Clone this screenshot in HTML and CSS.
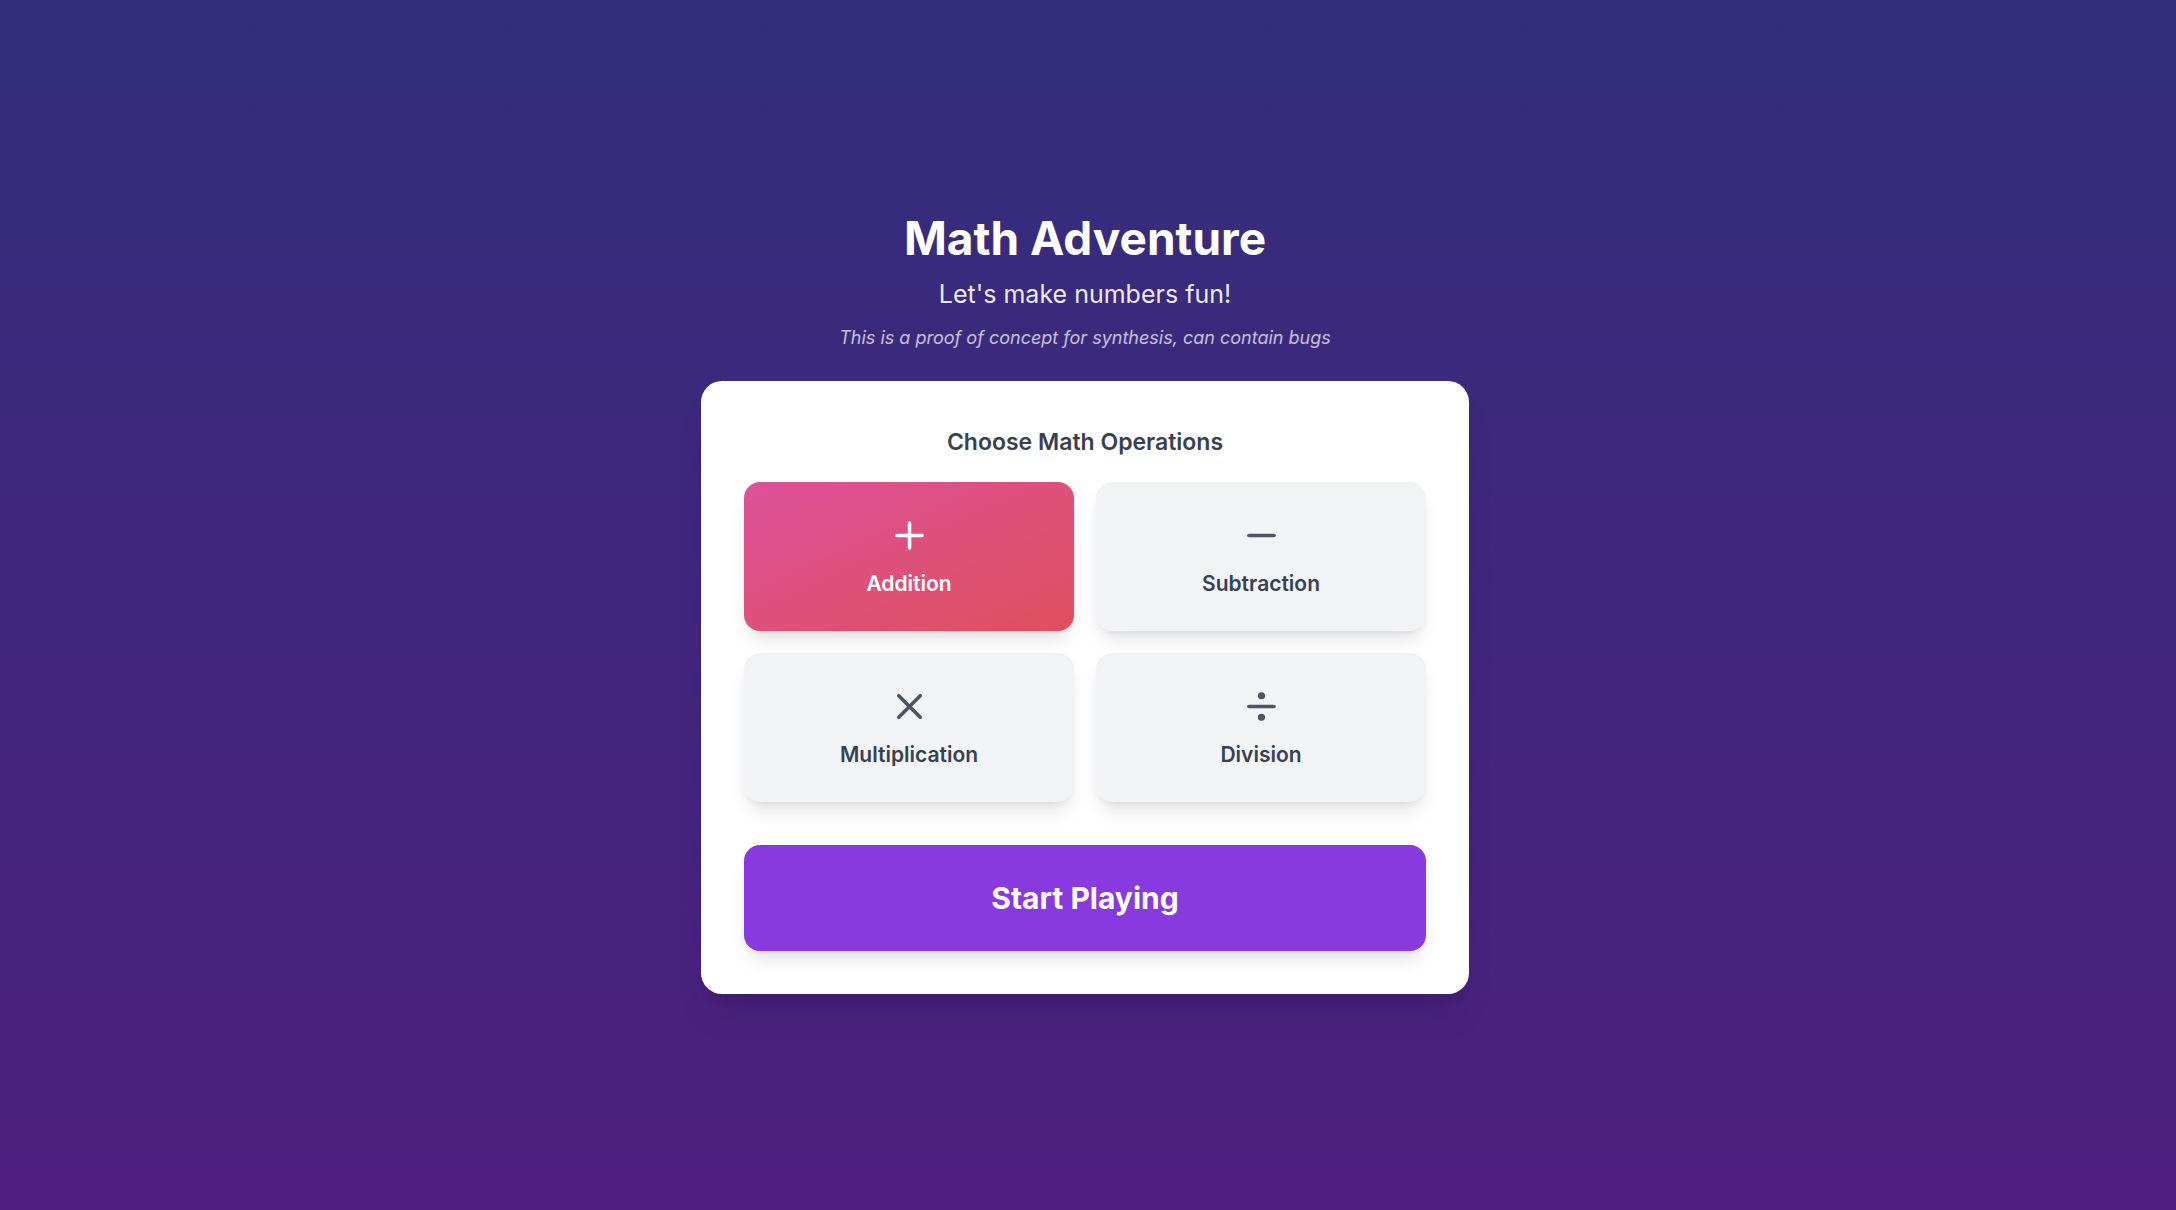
FILE: index.html
```html
<!DOCTYPE html>
<html lang="en">
<head>
<meta charset="utf-8">
<meta name="viewport" content="width=device-width, initial-scale=1">
<title>Math Adventure</title>
<link rel="stylesheet" href="styles.css">
</head>
<body>
<main class="page">
  <div class="content">
    <header class="intro">
      <h1 class="title">Math Adventure</h1>
      <p class="tagline">Let's make numbers fun!</p>
      <p class="notice">This is a proof of concept for synthesis, can contain bugs</p>
    </header>
    <section class="card" aria-labelledby="choose">
      <h2 class="card-title" id="choose">Choose Math Operations</h2>
      <div class="operations">
        <button class="operation selected" type="button" aria-pressed="true">
          <svg class="icon" viewBox="0 0 24 24" aria-hidden="true"><path d="M5 12h14M12 5v14"/></svg>
          <span>Addition</span>
        </button>
        <button class="operation" type="button" aria-pressed="false">
          <svg class="icon" viewBox="0 0 24 24" aria-hidden="true"><path d="M5 12h14"/></svg>
          <span>Subtraction</span>
        </button>
        <button class="operation" type="button" aria-pressed="false">
          <svg class="icon" viewBox="0 0 24 24" aria-hidden="true"><path d="M18 6 6 18M6 6l12 12"/></svg>
          <span>Multiplication</span>
        </button>
        <button class="operation" type="button" aria-pressed="false">
          <svg class="icon" viewBox="0 0 24 24" aria-hidden="true"><circle cx="12" cy="6" r="1"/><path d="M5 12h14"/><circle cx="12" cy="18" r="1"/></svg>
          <span>Division</span>
        </button>
      </div>
      <button class="start" type="button">Start Playing</button>
    </section>
  </div>
</main>
</body>
</html>
```
FILE: styles.css
```css
* {
  box-sizing: border-box;
}

body {
  margin: 0;
  font-family: Inter, "Liberation Sans", sans-serif;
}

h1,
h2,
p {
  margin: 0;
}

button {
  border: 0;
  font-family: inherit;
  cursor: pointer;
}

.page {
  display: flex;
  align-items: center;
  justify-content: center;
  min-height: 100vh;
  padding: 0 6px 4px 0;
  background: linear-gradient(to bottom, #322e7b, #4f1f80);
}

.content {
  width: 100%;
  max-width: 768px;
}

.intro {
  display: flex;
  flex-direction: column;
  gap: 11px;
  margin-bottom: 30px;
  text-align: center;
  color: #fff;
}

.title {
  font-size: 46px;
  line-height: 53px;
  font-weight: 700;
}

.tagline {
  font-size: 25px;
  line-height: 37px;
  opacity: 0.9;
}

.notice {
  font-size: 18px;
  line-height: 27px;
  font-style: italic;
  opacity: 0.7;
}

.card {
  padding: 43px;
  border-radius: 21px;
  background: #fff;
  box-shadow: 0 27px 33px -7px rgb(0 0 0 / 0.1), 0 11px 13px -8px rgb(0 0 0 / 0.1);
}

.card-title {
  margin-bottom: 21px;
  font-size: 23px;
  line-height: 37px;
  font-weight: 600;
  text-align: center;
  color: #374151;
}

.operations {
  display: grid;
  grid-template-columns: 1fr 1fr;
  gap: 22px;
  margin-bottom: 43px;
}

.operation {
  display: flex;
  flex-direction: column;
  align-items: center;
  gap: 11px;
  padding: 32px;
  border-radius: 16px;
  background: #f2f3f5;
  box-shadow: 0 13px 20px -4px rgb(0 0 0 / 0.1), 0 5px 8px -5px rgb(0 0 0 / 0.1);
  font-size: 21px;
  line-height: 31px;
  font-weight: 600;
  color: #374151;
}

.icon {
  width: 43px;
  height: 43px;
  fill: none;
  stroke: #4b5563;
  stroke-width: 2;
  stroke-linecap: round;
  stroke-linejoin: round;
}

.selected {
  background: linear-gradient(to bottom right, #db5299, #e04f5d);
  color: #fff;
}

.selected .icon {
  stroke: #fff;
}

.start {
  display: block;
  width: 100%;
  padding: 32px;
  border-radius: 16px;
  background: #8839df;
  box-shadow: 0 13px 20px -4px rgb(0 0 0 / 0.1), 0 5px 8px -5px rgb(0 0 0 / 0.1);
  font-size: 30px;
  line-height: 42px;
  font-weight: 700;
  color: #fff;
}
```
